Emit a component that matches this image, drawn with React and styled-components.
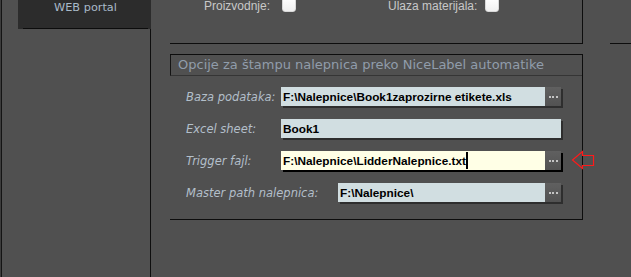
import React from "react";
import styled, { createGlobalStyle } from "styled-components";

const GlobalStyle = createGlobalStyle`
  html, body { margin: 0; padding: 0; background: #505050; overflow: hidden; }
  #root { width: 631px; height: 277px; }
`;

const Screen = styled.div`
  display: flex;
  width: 631px;
  height: 277px;
  background: #505050;
  overflow: hidden;
  box-shadow: inset 1px 0 0 #3c3c3c;
`;

const Sidebar = styled.aside`
  box-sizing: border-box;
  width: 150px;
  margin-left: 1px;
  border-left: 1px solid #141414;
  border-right: 1px solid #0e0e0e;
  padding-left: 16px;
  flex-shrink: 0;
`;

const Tab = styled.div`
  box-sizing: border-box;
  width: 133px;
  height: 29px;
  background: #2c2c2c;
  padding: 0 3px 0 5px;
`;

const TabInner = styled.div`
  box-sizing: border-box;
  height: 29px;
  border-bottom: 1px solid #0c0c0c;
  padding-top: 1px;
  text-align: center;
  font-family: "DejaVu Sans", Verdana, sans-serif;
  font-size: 11.3px;
  line-height: 14px;
  color: #a9bac9;
  margin-bottom: 1px;
`;

const Main = styled.main`
  flex: 1;
  padding-left: 19px;
  display: flex;
  flex-direction: column;
`;

const TopRow = styled.div`
  display: flex;
  height: 44px;
`;

const TopGroup = styled.div`
  box-sizing: border-box;
  width: 413px;
  height: 44px;
  border-right: 1px solid #0d0d0d;
  border-bottom: 1px solid #0d0d0d;
  padding-left: 34px;
  display: flex;
  align-items: flex-start;
`;

const RightStub = styled.div`
  box-sizing: border-box;
  flex: 1;
  margin-left: 27px;
  height: 44px;
  border-bottom: 1px solid #0d0d0d;
`;

const CheckItem = styled.div`
  display: flex;
  align-items: center;
  height: 14px;
  margin-top: -1px;
  margin-left: ${(p) => p.$offset || 0}px;
  gap: 4px;
`;

const CheckLabel = styled.span`
  width: ${(p) => p.$width}px;
  font-family: "Liberation Sans", Arial, sans-serif;
  font-size: 12px;
  line-height: 14px;
  color: #c8c8c8;
  white-space: nowrap;
`;

const CheckBox = styled.span`
  box-sizing: border-box;
  width: 14px;
  height: 15px;
  margin-top: -3px;
  border-radius: 3px;
  background: linear-gradient(#ffffff, #f0f0f0);
  border: 1px solid #d8d8d8;
`;

const Group = styled.section`
  box-sizing: border-box;
  width: 413px;
  height: 166px;
  margin-top: 10px;
  border-top: 1px solid #0d0d0d;
  border-right: 1px solid #0d0d0d;
  border-bottom: 1px solid #0d0d0d;
`;

const Caption = styled.div`
  box-sizing: border-box;
  height: 21px;
  border-left: 1px solid #141414;
  border-bottom: 1px solid #353535;
  padding-left: 7px;
  font-family: "DejaVu Sans", Verdana, sans-serif;
  font-size: 13px;
  line-height: 20px;
  color: #909dab;
  white-space: nowrap;
`;

const Rows = styled.div`
  display: flex;
  flex-direction: column;
  gap: 13px;
  padding: 11px 0 0 16px;
`;

const Row = styled.div`
  display: flex;
  align-items: center;
  height: 19px;
`;

const Label = styled.span`
  width: ${(p) => p.$width}px;
  flex-shrink: 0;
  font-family: "DejaVu Sans", Verdana, sans-serif;
  font-style: italic;
  font-size: 11.5px;
  color: #b3bfca;
  white-space: nowrap;
`;

const FieldWrap = styled.div`
  display: flex;
  flex-shrink: 0;
  width: ${(p) => p.$width}px;
  height: 19px;
  box-shadow: 2px 2px 0 ${(p) => (p.$focused ? "#000000" : "#2e2e2e")};
`;

const Field = styled.div`
  flex: 1;
  display: flex;
  align-items: center;
  padding-left: 2px;
  background: ${(p) => (p.$focused ? "#ffffe6" : "#d1dee1")};
  font-family: "Liberation Sans", Arial, sans-serif;
  font-weight: bold;
  font-size: 11.8px;
  color: #000;
  white-space: nowrap;
  overflow: hidden;
`;

const Caret = styled.span`
  display: inline-block;
  width: 2px;
  height: 17px;
  background: #000;
`;

const Browse = styled.div`
  width: 16px;
  display: flex;
  align-items: center;
  justify-content: center;
  gap: 1.5px;
  background: linear-gradient(#606060, #525252);
`;

const Dot = styled.span`
  width: 2px;
  height: 2px;
  background: #c4c4c4;
`;

const ArrowSlot = styled.span`
  flex: none;
  display: block;
  width: 26px;
  height: 21px;
  margin-left: 9px;
  margin-top: -1px;
`;

function BrowseButton() {
  return (
    <Browse>
      <Dot />
      <Dot />
      <Dot />
    </Browse>
  );
}

function RedArrow() {
  return (
    <ArrowSlot>
      <svg width="26" height="21" style={{ display: "block", overflow: "visible" }}>
        <path
          d="M2.5 10 L12.5 1.5 L12.5 5.5 L23.5 5.5 L23.5 15.5 L12.5 15.5 L12.5 18.5 Z"
          fill="none"
          stroke="#ff1a1a"
          strokeWidth="1.2"
        />
      </svg>
    </ArrowSlot>
  );
}

export default function App() {
  return (
    <>
      <GlobalStyle />
      <Screen>
        <Sidebar>
          <Tab>
            <TabInner>WEB portal</TabInner>
          </Tab>
        </Sidebar>
        <Main>
          <TopRow>
            <TopGroup>
              <CheckItem>
                <CheckLabel $width={74}>Proizvodnje:</CheckLabel>
                <CheckBox />
              </CheckItem>
              <CheckItem $offset={92}>
                <CheckLabel $width={93}>Ulaza materijala:</CheckLabel>
                <CheckBox />
              </CheckItem>
            </TopGroup>
            <RightStub />
          </TopRow>
          <Group>
            <Caption>Opcije za štampu nalepnica preko NiceLabel automatike</Caption>
            <Rows>
              <Row>
                <Label $width={95}>Baza podataka:</Label>
                <FieldWrap $width={280}>
                  <Field>F:\Nalepnice\Book1zaprozirne etikete.xls</Field>
                  <BrowseButton />
                </FieldWrap>
              </Row>
              <Row>
                <Label $width={95}>Excel sheet:</Label>
                <FieldWrap $width={280}>
                  <Field>Book1</Field>
                </FieldWrap>
              </Row>
              <Row>
                <Label $width={95}>Trigger fajl:</Label>
                <FieldWrap $width={280} $focused>
                  <Field $focused>
                    F:\Nalepnice\LidderNalepnice.txt
                    <Caret />
                  </Field>
                  <BrowseButton />
                </FieldWrap>
                <RedArrow />
              </Row>
              <Row>
                <Label $width={152}>Master path nalepnica:</Label>
                <FieldWrap $width={223}>
                  <Field>F:\Nalepnice\</Field>
                  <BrowseButton />
                </FieldWrap>
              </Row>
            </Rows>
          </Group>
        </Main>
      </Screen>
    </>
  );
}
